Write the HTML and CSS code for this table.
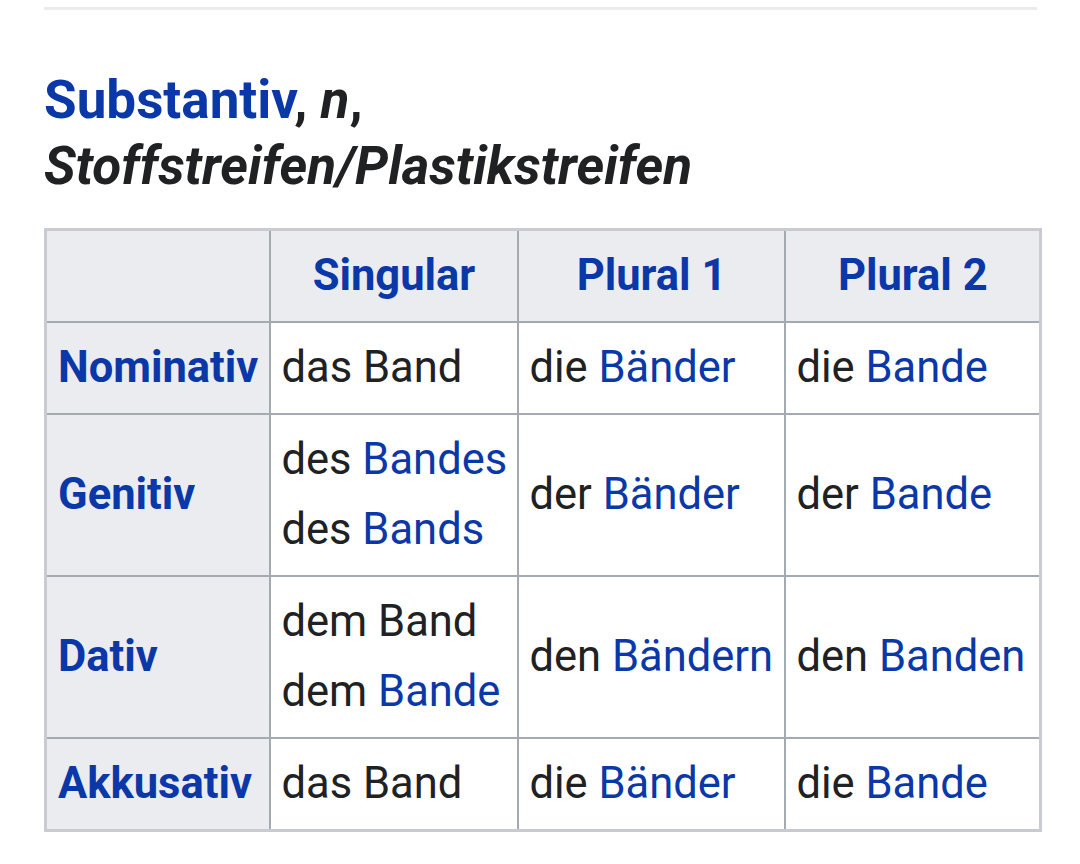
FILE: index.html
```html
<!DOCTYPE html>
<html lang="de">
<head>
<meta charset="utf-8">
<title>Band – Substantiv</title>
<link rel="stylesheet" href="styles.css">
</head>
<body>
<div class="page">
  <hr class="rule">
  <h3 class="pos-head"><a class="link" href="#">Substantiv</a>, <i>n</i>, <i>Stoffstreifen/Plastikstreifen</i></h3>
  <table class="flex-table">
    <colgroup>
      <col class="c-case">
      <col class="c-sg">
      <col class="c-pl1">
      <col class="c-pl2">
    </colgroup>
    <tr>
      <th class="corner"></th>
      <th class="col-head"><a class="link" href="#">Singular</a></th>
      <th class="col-head"><a class="link" href="#">Plural 1</a></th>
      <th class="col-head"><a class="link" href="#">Plural 2</a></th>
    </tr>
    <tr>
      <th class="row-head"><a class="link" href="#">Nominativ</a></th>
      <td>das Band</td>
      <td>die <a class="link" href="#">Bänder</a></td>
      <td>die <a class="link" href="#">Bande</a></td>
    </tr>
    <tr>
      <th class="row-head"><a class="link" href="#">Genitiv</a></th>
      <td>des <a class="link" href="#">Bandes</a><br>des <a class="link" href="#">Bands</a></td>
      <td>der <a class="link" href="#">Bänder</a></td>
      <td>der <a class="link" href="#">Bande</a></td>
    </tr>
    <tr>
      <th class="row-head"><a class="link" href="#">Dativ</a></th>
      <td>dem Band<br>dem <a class="link" href="#">Bande</a></td>
      <td>den <a class="link" href="#">Bändern</a></td>
      <td>den <a class="link" href="#">Banden</a></td>
    </tr>
    <tr>
      <th class="row-head"><a class="link" href="#">Akkusativ</a></th>
      <td>das Band</td>
      <td>die <a class="link" href="#">Bänder</a></td>
      <td>die <a class="link" href="#">Bande</a></td>
    </tr>
  </table>
</div>
</body>
</html>
```

FILE: styles.css
```css
html, body {
  margin: 0;
  padding: 0;
  background: #ffffff;
}

body {
  font-family: Roboto, "Liberation Sans", sans-serif;
  color: #202122;
}

.page {
  padding: 7px 39px 0 44px;
}

.rule {
  margin: 0;
  border: 0;
  height: 3px;
  background: #eaecf0;
  width: 993px;
}

.pos-head {
  margin: 57px 0 29px 0;
  max-width: 860px;
  font-size: 53px;
  line-height: 66px;
  font-weight: 700;
  color: #202122;
}

.link {
  color: #0a38a8;
  text-decoration: none;
}

.flex-table {
  border-collapse: collapse;
  border: 3px solid #c8ccd1;
  font-size: 43.5px;
  line-height: 70px;
  width: 995px;
  table-layout: fixed;
}

.c-case { width: 224px; }
.c-sg { width: 248px; }
.c-pl1 { width: 267px; }
.c-pl2 { width: 256px; }

.flex-table th,
.flex-table td {
  border: 2px solid #a4aab1;
  padding: 10px 10px 10px 11px;
  vertical-align: middle;
}

.flex-table th {
  background: #eaecf0;
  font-weight: 700;
}

.col-head {
  text-align: center;
}

.row-head {
  text-align: left;
  white-space: nowrap;
}

.flex-table td {
  background: #ffffff;
  text-align: left;
  white-space: nowrap;
}
```
